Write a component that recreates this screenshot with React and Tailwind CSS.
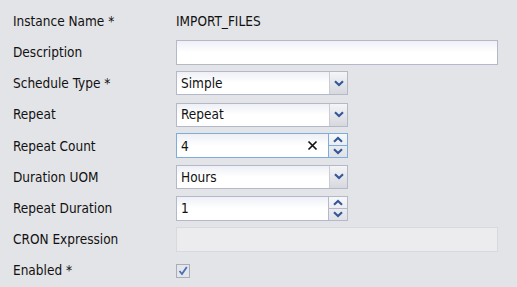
import React from 'react'

const font = { fontFamily: 'Tahoma, "DejaVu Sans Condensed", "Liberation Sans", sans-serif' }

function Chevron({ up = false }) {
  return (
    <svg width="10" height="7" viewBox="0 0 10 7" aria-hidden>
      <path
        d={up ? 'M1 5.8 L5 2 L9 5.8' : 'M1 1.2 L5 5 L9 1.2'}
        fill="none"
        stroke="#34569a"
        strokeWidth="2.1"
      />
    </svg>
  )
}

function Label({ children }) {
  return <div className="w-[163px] shrink-0 text-[13.5px] text-[#111]">{children}</div>
}

function TextBox({ value = '', disabled = false }) {
  return (
    <div
      className={`w-[322px] h-[25px] border flex items-center px-[4px] text-[13.5px] ${
        disabled
          ? 'border-[#d8d9dc] bg-[#ececee]'
          : 'border-[#b5b8c8] bg-gradient-to-b from-[#eef0f6] via-white to-white'
      }`}
    >
      {value}
    </div>
  )
}

function Select({ value }) {
  return (
    <div className="w-[172px] h-[24px] flex border border-[#b5b8c8]">
      <div className="flex-1 flex items-center px-[4px] text-[13.5px] bg-gradient-to-b from-[#eef0f6] via-white to-white">
        {value}
      </div>
      <div className="w-[18px] flex items-center justify-center border-l border-[#c9cbd6] bg-gradient-to-b from-[#f4f5f7] to-[#d6d8de]">
        <Chevron />
      </div>
    </div>
  )
}

function Spinner({ value, focused = false, clear = false }) {
  const border = focused ? 'border-[#7eadd9]' : 'border-[#b5b8c8]'
  return (
    <div className="flex h-[25px]">
      <div
        className={`w-[153px] border ${border} flex items-center justify-between px-[4px] text-[13.5px] bg-gradient-to-b from-[#eef0f6] via-white to-white`}
      >
        <span>{value}</span>
        {clear && (
          <svg width="11" height="11" viewBox="0 0 11 11" className="mr-[6px]" aria-hidden>
            <path d="M1.5 1.5 L9.5 9.5 M9.5 1.5 L1.5 9.5" stroke="#111" strokeWidth="1.7" />
          </svg>
        )}
      </div>
      <div className={`w-[19px] flex flex-col border ${border} border-l-0 bg-gradient-to-b from-[#f7f8fa] to-[#dfe1e6]`}>
        <div className={`flex-1 flex items-center justify-center border-b ${border}`}>
          <Chevron up />
        </div>
        <div className="flex-1 flex items-center justify-center">
          <Chevron />
        </div>
      </div>
    </div>
  )
}

function Row({ label, children }) {
  return (
    <div className="flex items-center h-[24px]">
      <Label>{label}</Label>
      {children}
    </div>
  )
}

export default function App() {
  return (
    <div className="w-[517px] h-[287px] bg-[#e3e4e7] text-[#111] pl-[13px] pt-[9px]" style={font}>
      <div className="flex flex-col gap-[7.2px]">
        <Row label="Instance Name *">
          <span className="text-[13.5px]">IMPORT_FILES</span>
        </Row>
        <Row label="Description">
          <TextBox />
        </Row>
        <Row label="Schedule Type *">
          <Select value="Simple" />
        </Row>
        <Row label="Repeat">
          <Select value="Repeat" />
        </Row>
        <Row label="Repeat Count">
          <Spinner value="4" focused clear />
        </Row>
        <Row label="Duration UOM">
          <Select value="Hours" />
        </Row>
        <Row label="Repeat Duration">
          <Spinner value="1" />
        </Row>
        <Row label="CRON Expression">
          <TextBox disabled />
        </Row>
        <Row label="Enabled *">
          <div className="w-[14px] h-[14px] border border-[#a9adb8] bg-[#e4e6ec] flex items-center justify-center">
            <svg width="10" height="10" viewBox="0 0 10 10" aria-hidden>
              <path d="M1.5 5 L4 8 L8.8 1" fill="none" stroke="#4a6fb5" strokeWidth="1.8" />
            </svg>
          </div>
        </Row>
      </div>
    </div>
  )
}
